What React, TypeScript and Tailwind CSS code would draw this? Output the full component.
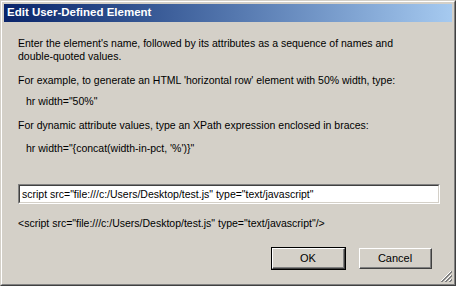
import React from "react";

function Grip() {
  return (
    <svg width="12" height="12" viewBox="0 0 12 12" className="absolute right-[2px] bottom-[2px]">
      <path d="M11 1 L1 11 M11 5 L5 11 M11 9 L9 11" stroke="#ffffff" strokeWidth="1" />
      <path d="M12 1 L1 12 M12 2 L2 12 M12 5 L5 12 M12 6 L6 12 M12 9 L9 12 M12 10 L10 12" stroke="#808080" strokeWidth="1" />
    </svg>
  );
}

function Button({ label, isDefault }: { label: string; isDefault?: boolean }) {
  return (
    <div className={isDefault ? "border border-black" : "border border-transparent"}>
      <div className="border-t border-l border-t-white border-l-white border-r border-b border-r-[#404040] border-b-[#404040]">
        <div className="w-[71px] h-[19px] flex items-center justify-center border-r border-b border-r-[#808080] border-b-[#808080] text-[11px]">
          {label}
        </div>
      </div>
    </div>
  );
}

export default function App() {
  return (
    <div
      className="w-[456px] h-[286px] bg-[#d4d0c8] text-black"
      style={{ fontFamily: '"Liberation Sans", Arial, sans-serif' }}
    >
      {/* window frame */}
      <div className="w-full h-full border-t border-l border-t-[#d4d0c8] border-l-[#d4d0c8] border-r border-b border-r-[#404040] border-b-[#404040]">
        <div className="w-full h-full border-t border-l border-t-white border-l-white border-r border-b border-r-[#808080] border-b-[#808080]">
          <div className="relative w-full h-full p-[2px] flex flex-col">
            {/* title bar */}
            <div className="h-[18px] flex items-center pl-[3px] bg-gradient-to-r from-[#0a246a] to-[#a6caf0]">
              <span className="text-white font-bold text-[11.5px] leading-none">Edit User-Defined Element</span>
            </div>

            <div className="flex flex-col pl-[14px] pr-[12px] text-[10.5px] leading-[13px]">
              <p className="mt-[15px]">
                Enter the element's name, followed by its attributes as a sequence of names and
                <br />
                double-quoted values.
              </p>
              <p className="mt-[11px]">For example, to generate an HTML 'horizontal row' element with 50% width, type:</p>
              <p className="mt-[8px] pl-[8px]">hr width="50%"</p>
              <p className="mt-[11px]">For dynamic attribute values, type an XPath expression enclosed in braces:</p>
              <p className="mt-[10px] pl-[8px]">hr width="&#123;concat(width-in-pct, '%')&#125;"</p>

              {/* input */}
              <div className="mt-[29px] w-[422px] border-t border-l border-t-[#808080] border-l-[#808080] border-r border-b border-r-white border-b-white">
                <div className="h-[18px] bg-white flex items-center pl-[2px] border-t border-l border-t-[#404040] border-l-[#404040] border-r border-b border-r-[#d4d0c8] border-b-[#d4d0c8]">
                  script src="file:///c:/Users/Desktop/test.js" type="text/javascript"
                </div>
              </div>

              <p className="mt-[13px]">&lt;script src="file:///c:/Users/Desktop/test.js" type="text/javascript"/&gt;</p>

              <div className="mt-[17px] flex justify-end gap-[12px] pr-[7px]">
                <Button label="OK" isDefault />
                <Button label="Cancel" />
              </div>
            </div>
            <Grip />
          </div>
        </div>
      </div>
    </div>
  );
}
